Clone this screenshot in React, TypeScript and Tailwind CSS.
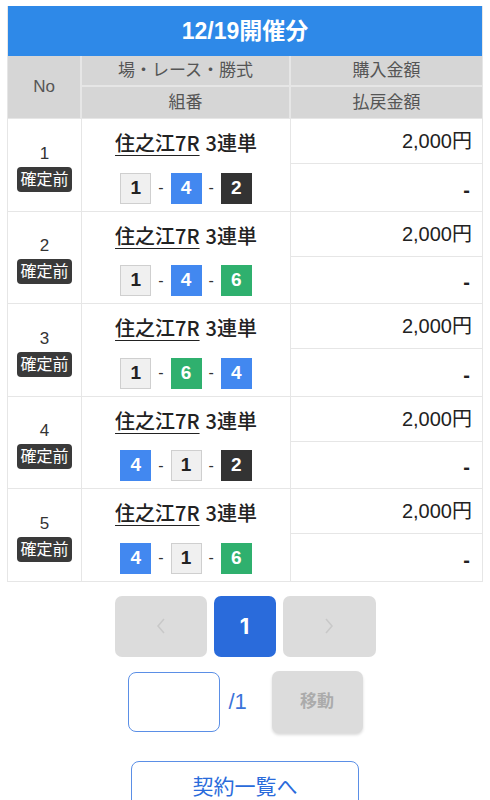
const rows = [
  { no: 1, nums: [1, 4, 2] },
  { no: 2, nums: [1, 4, 6] },
  { no: 3, nums: [1, 6, 4] },
  { no: 4, nums: [4, 1, 2] },
  { no: 5, nums: [4, 1, 6] },
];

const boxStyle: Record<number, string> = {
  1: "bg-[#f0f0f0] text-[#222] border border-[#cfcfcf]",
  2: "bg-[#333333] text-white border border-[#333333]",
  4: "bg-[#4288f0] text-white border border-[#4288f0]",
  6: "bg-[#2fb06e] text-white border border-[#2fb06e]",
};

function NumBox({ n }: { n: number }) {
  return (
    <span
      className={`flex h-[31px] w-[31px] items-center justify-center text-[19px] font-bold ${boxStyle[n]}`}
    >
      {n}
    </span>
  );
}

function Row({ no, nums }: { no: number; nums: number[] }) {
  return (
    <div className="grid h-[92.5px] grid-cols-[74px_209px_1fr] border-b border-[#e6e6e6]">
      <div className="flex flex-col items-center justify-center gap-[2px] border-r border-[#e6e6e6] pt-[4px]">
        <span className="text-[17px] leading-[22px] text-[#333]">{no}</span>
        <span className="rounded-[4px] bg-[#3a3a3a] px-[3px] text-[16px] leading-[25px] text-white">
          確定前
        </span>
      </div>
      <div className="flex flex-col border-r border-[#e6e6e6]">
        <div
          className="flex h-[46px] items-center justify-center pt-[2px] text-[20px] font-medium text-[#222]"
          style={{ fontFamily: '"Noto Sans CJK JP", sans-serif' }}
        >
          <span className="underline decoration-1 underline-offset-[4px]">住之江7R</span>
          <span className="ml-[6px]">3連単</span>
        </div>
        <div className="flex h-[46px] items-center justify-center text-[#333]">
          <NumBox n={nums[0]} />
          <span className="mx-[7px] text-[16px]">-</span>
          <NumBox n={nums[1]} />
          <span className="mx-[7px] text-[16px]">-</span>
          <NumBox n={nums[2]} />
        </div>
      </div>
      <div className="flex flex-col">
        <div className="flex h-[45px] items-center justify-end border-b border-[#e6e6e6] pr-[10px] text-[20px] text-[#222]">
          2,000円
        </div>
        <div className="flex flex-1 items-center justify-end pr-[12px] pt-[4px] text-[20px] font-bold text-[#222]">
          -
        </div>
      </div>
    </div>
  );
}

export default function App() {
  return (
    <div
      className="min-h-[800px] bg-white px-[7px] pt-[6px]"
      style={{ fontFamily: '"Liberation Sans", "Noto Sans CJK JP", sans-serif' }}
    >
      <div className="border-x border-[#e6e6e6]">
        <div className="flex h-[50px] items-center justify-center bg-[#2e89e8] text-[23px] font-bold text-white">
          12/19開催分
        </div>
        <div className="grid grid-cols-[74px_209px_1fr] border-b border-[#e6e6e6] bg-[#d6d6d6] text-[17px] text-[#555]">
          <div className="flex items-center justify-center border-r-2 border-[#e6e6e6] text-[17px]">
            No
          </div>
          <div className="flex flex-col border-r-2 border-[#e6e6e6]">
            <div className="flex h-[31px] items-center justify-center border-b-2 border-[#e6e6e6]">
              場・レース・勝式
            </div>
            <div className="flex h-[31px] items-center justify-center">組番</div>
          </div>
          <div className="flex flex-col">
            <div className="flex h-[31px] items-center justify-center border-b-2 border-[#e6e6e6]">
              購入金額
            </div>
            <div className="flex h-[31px] items-center justify-center">払戻金額</div>
          </div>
        </div>
        {rows.map((r) => (
          <Row key={r.no} no={r.no} nums={r.nums} />
        ))}
      </div>

      <div className="mt-[14px] flex justify-center gap-[7px]">
        <div className="flex h-[61px] w-[92px] items-center justify-center rounded-[7px] bg-[#dcdcdc]">
          <svg width="14" height="20" viewBox="0 0 14 20" fill="none" stroke="#c8c8c8" strokeWidth="1.5">
            <path d="M10 3 L4 10 L10 17" />
          </svg>
        </div>
        <div
          className="flex h-[61px] w-[62px] items-center justify-center rounded-[7px] bg-[#2a6bdb] text-[22px] font-bold text-white"
          style={{ fontFamily: "Inter, sans-serif" }}
        >
          1
        </div>
        <div className="flex h-[61px] w-[93px] items-center justify-center rounded-[7px] bg-[#dcdcdc]">
          <svg width="14" height="20" viewBox="0 0 14 20" fill="none" stroke="#c8c8c8" strokeWidth="1.5">
            <path d="M4 3 L10 10 L4 17" />
          </svg>
        </div>
      </div>

      <div className="mt-[14px] flex items-center justify-center">
        <input
          type="text"
          className="h-[60px] w-[92px] rounded-[8px] border border-[#5b8fe6] bg-white outline-none"
        />
        <span className="ml-[9px] w-[43px] text-[22px] text-[#3b73d9]">/1</span>
        <div className="flex h-[62px] w-[91px] items-center justify-center rounded-[7px] bg-[#dcdcdc] text-[17px] font-bold text-[#ababab] shadow-[0_2px_3px_rgba(0,0,0,0.15)]">
          移動
        </div>
      </div>

      <div className="mt-[28px] flex justify-center">
        <div className="flex h-[52px] w-[228px] items-center justify-center rounded-[8px] border border-[#5b8fe6] text-[21px] text-[#2a6bdb]">
          契約一覧へ
        </div>
      </div>
    </div>
  );
}
